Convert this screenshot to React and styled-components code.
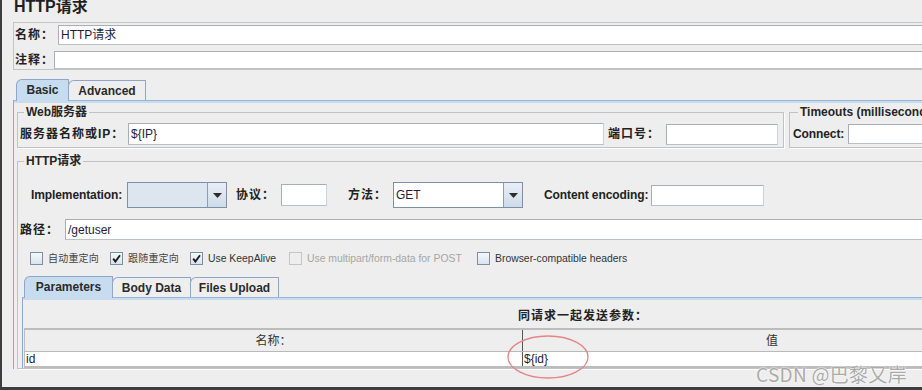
import React from "react";
import styled, { createGlobalStyle } from "styled-components";

const FONT = `"Liberation Sans", "Noto Sans CJK SC", sans-serif`;

const GlobalStyle = createGlobalStyle`
  html, body {
    margin: 0;
    padding: 0;
    background: #eeeeee;
    overflow: hidden;
  }
  body {
    font-family: ${FONT};
  }
`;

const Page = styled.div`
  position: relative;
  width: 922px;
  height: 390px;
  box-sizing: border-box;
  border-left: 2px solid #3d3d3d;
  border-bottom: 3px solid #3d3d3d;
  background: #eeeeee;
  overflow: hidden;
  color: #222;
`;

const Inner = styled.div`
  width: 1100px;
`;

const Title = styled.h1`
  margin: 0 0 0 12px;
  height: 22px;
  font: bold 16px/13px ${FONT};
  color: #1f1f1f;
`;

const NamePanel = styled.div`
  margin-left: 11px;
  height: 48px;
  box-sizing: border-box;
  border: 1px solid #c4c4c4;
  border-right: none;
  padding: 2px 0 0 1px;
  display: flex;
  flex-direction: column;
  gap: 6px;
`;

const Row = styled.div`
  display: flex;
  align-items: center;
  height: ${p => p.$h}px;
  margin-top: ${p => p.$mt || 0}px;
  padding-left: ${p => p.$pl || 0}px;
`;

const Label = styled.span`
  flex: none;
  box-sizing: border-box;
  width: ${p => (p.$w ? `${p.$w}px` : "auto")};
  margin-left: ${p => p.$ml || 0}px;
  font: bold 12px/14px ${FONT};
  letter-spacing: ${p => (p.$cn ? "1px" : "-0.1px")};
  color: #222;
  white-space: nowrap;
`;

const Field = styled.div`
  box-sizing: border-box;
  flex: ${p => (p.$w ? "none" : "1")};
  width: ${p => (p.$w ? `${p.$w}px` : "auto")};
  height: ${p => p.$h || 21}px;
  background: #ffffff;
  border: 1px solid #a7aeb8;
  border-right-color: #cdd3da;
  border-bottom-color: #b9c0c8;
  padding-left: 2px;
  display: flex;
  align-items: center;
  font: 12px/14px ${FONT};
  color: #1f1d38;
  white-space: nowrap;
`;

const TabBar = styled.div`
  display: flex;
  align-items: flex-end;
  height: 21px;
  margin-left: ${p => p.$ml}px;
  margin-top: ${p => p.$mt || 0}px;
  position: relative;
  z-index: 1;
`;

const Tab = styled.div`
  box-sizing: border-box;
  width: ${p => p.$w}px;
  height: ${p => (p.$active ? 22 : 20)}px;
  margin-bottom: ${p => (p.$active ? -1 : 0)}px;
  margin-left: -1px;
  border: 1px solid #8ea6c8;
  border-bottom: none;
  border-top-left-radius: 6px;
  background: ${p => (p.$active ? "#c8dcf0" : "#eeeeee")};
  font: bold 12px/20px ${FONT};
  text-align: center;
  color: #2a2a2a;
  &:first-child {
    margin-left: 0;
  }
`;

const TabPanel = styled.div`
  margin-left: ${p => p.$ml}px;
  border-top: 1px solid #9ab4da;
  border-left: 1px solid #8ea8d2;
  box-shadow: inset 0 2px 0 #c8dcf0;
  padding: ${p => p.$pad};
`;

const GroupRow = styled.div`
  display: flex;
  gap: 5px;
`;

const Group = styled.fieldset`
  margin: ${p => p.$mt || 0}px 0 0 0;
  min-width: 0;
  box-sizing: border-box;
  flex: ${p => (p.$w ? "none" : "1")};
  width: ${p => (p.$w ? `${p.$w}px` : "auto")};
  border: 1px solid #c2c2c2;
  box-shadow: 1px 1px 0 #ffffff;
  padding: ${p => p.$pad};
`;

const Legend = styled.legend`
  margin-left: ${p => p.$ml || 4}px;
  padding: 0 2px;
  font: bold 12px/13px ${FONT};
  color: #262626;
  white-space: nowrap;
`;

const Combo = styled.div`
  flex: none;
  box-sizing: border-box;
  display: flex;
  width: ${p => p.$w}px;
  height: 26px;
  border: 1px solid #7d90aa;
  background: ${p => (p.$empty ? "#dde5ee" : "#ffffff")};
`;

const ComboText = styled.div`
  flex: 1;
  padding-left: 2px;
  display: flex;
  align-items: center;
  font: 12px/14px ${FONT};
  color: #1f1d38;
`;

const ComboArrow = styled.div`
  width: 18px;
  border-left: 1px solid #8b9db5;
  background: linear-gradient(#e8eef6, #cfdbe8);
  display: flex;
  align-items: center;
  justify-content: center;
`;

const CheckRow = styled.div`
  display: flex;
  align-items: center;
  height: 14px;
  margin-top: 11px;
  padding-left: 10px;
`;

const CheckItem = styled.div`
  flex: none;
  width: ${p => (p.$w ? `${p.$w}px` : "auto")};
  display: flex;
  align-items: center;
  gap: 5px;
  font: 10.4px/13px ${FONT};
  color: ${p => (p.$disabled ? "#a6a6a6" : "#333333")};
  white-space: nowrap;
`;

const CnText = styled.span`
  font-size: 10px;
  letter-spacing: 0.2px;
  color: #444;
`;

const Box = styled.span`
  flex: none;
  box-sizing: border-box;
  width: 13px;
  height: 13px;
  border: 1px solid ${p => (p.$disabled ? "#c4c4c4" : "#7d8ea4")};
  background: ${p =>
    p.$disabled ? "#eeeeee" : "linear-gradient(#f5f8fc, #d9e3ef)"};
  display: flex;
  align-items: center;
  justify-content: center;
`;

const Caption = styled.div`
  height: 25px;
  padding: 4px 0 0 495px;
  display: flex;
  align-items: center;
  font: bold 12px/14px ${FONT};
  letter-spacing: 1px;
  color: #222;
`;

const Table = styled.div`
  width: 996px;
  margin-left: 1px;
  border-left: 1px solid #bdbdbd;
`;

const TableRow = styled.div`
  display: grid;
  grid-template-columns: 497px 1fr;
  height: ${p => p.$h}px;
  box-sizing: border-box;
  background: ${p => (p.$head ? "#eeeeee" : "#ffffff")};
  border-top: ${p => (p.$head ? "2px solid #bcbcbc" : "none")};
  border-bottom: ${p => (p.$head ? "1px solid #b9b9b9" : "2px solid #bcbcbc")};
`;

const Cell = styled.div`
  display: flex;
  align-items: center;
  justify-content: ${p => (p.$center ? "center" : "flex-start")};
  padding-left: ${p => (p.$center ? 0 : 1)}px;
  border-left: ${p => (p.$sep ? "1px solid #555555" : "none")};
  font: 12px/14px ${FONT};
  color: ${p => (p.$center ? "#333" : "#1f1d38")};
`;

const Mark = styled.svg`
  position: absolute;
  left: 503px;
  top: 334px;
  pointer-events: none;
`;

const Watermark = styled.div`
  position: absolute;
  left: 754px;
  top: 362px;
  font: 19px/23px "Noto Sans CJK SC", "Liberation Sans", sans-serif;
  letter-spacing: 0.3px;
  color: #aaaaaa;
  text-shadow: 0 0 2px #ffffff, 0 0 1px #ffffff;
  white-space: nowrap;
`;

const Arrow = () => (
  <svg width="9" height="5" viewBox="0 0 9 5">
    <path d="M0 0 H9 L4.5 5 Z" fill="#2c2c2c" />
  </svg>
);

const Check = () => (
  <svg width="9" height="9" viewBox="0 0 9 9">
    <path d="M1.2 4.6 L3.4 7.6 L8 1.2" fill="none" stroke="#1e1e1e" strokeWidth="1.9" />
  </svg>
);

const checks = [
  { label: "自动重定向", cn: true, w: 80 },
  { label: "跟随重定向", cn: true, w: 80, checked: true },
  { label: "Use KeepAlive", w: 99, checked: true },
  { label: "Use multipart/form-data for POST", w: 188, disabled: true },
  { label: "Browser-compatible headers" }
];

const App = () => (
  <Page>
    <GlobalStyle />
    <Inner>
      <Title>HTTP请求</Title>
      <NamePanel>
        <Row $h={20}>
          <Label $cn $w={43}>名称：</Label>
          <Field $h={20}>HTTP请求</Field>
        </Row>
        <Row $h={18}>
          <Label $cn $w={39}>注释：</Label>
          <Field $h={18} />
        </Row>
      </NamePanel>

      <TabBar $ml={14} $mt={9}>
        <Tab $w={53} $active>Basic</Tab>
        <Tab $w={78}>Advanced</Tab>
      </TabBar>
      <TabPanel $ml={11} $pad="5px 0 0 3px">
        <GroupRow>
          <Group $w={767} $pad="4px 4px 2px 2px">
            <Legend>Web服务器</Legend>
            <Row $h={22}>
              <Label $cn $w={108}>服务器名称或IP：</Label>
              <Field $w={476} $h={22}>{"${IP}"}</Field>
              <Label $cn $w={58} $ml={4}>端口号：</Label>
              <Field $w={112} $h={21} />
            </Row>
          </Group>
          <Group $pad="4px 0 2px 3px">
            <Legend $ml={5}>Timeouts (milliseconds)</Legend>
            <Row $h={22}>
              <Label $w={55}>Connect:</Label>
              <Field $w={150} $h={20} />
            </Row>
          </Group>
        </GroupRow>

        <Group $mt={7} $pad="14px 0 0 2px">
          <Legend>HTTP请求</Legend>
          <Row $h={26} $pl={11}>
            <Label $w={96}>Implementation:</Label>
            <Combo $w={100} $empty>
              <ComboText />
              <ComboArrow><Arrow /></ComboArrow>
            </Combo>
            <Label $cn $w={45} $ml={9}>协议：</Label>
            <Field $w={46} $h={22} />
            <Label $cn $w={45} $ml={21}>方法：</Label>
            <Combo $w={130}>
              <ComboText>GET</ComboText>
              <ComboArrow><Arrow /></ComboArrow>
            </Combo>
            <Label $w={107} $ml={21}>Content encoding:</Label>
            <Field $w={113} $h={21} />
          </Row>

          <Row $h={21} $mt={11}>
            <Label $cn $w={45}>路径：</Label>
            <Field $h={21}>/getuser</Field>
          </Row>

          <CheckRow>
            {checks.map(c => (
              <CheckItem key={c.label} $w={c.w} $disabled={c.disabled}>
                <Box $disabled={c.disabled}>{c.checked && <Check />}</Box>
                {c.cn ? <CnText>{c.label}</CnText> : c.label}
              </CheckItem>
            ))}
          </CheckRow>

          <TabBar $ml={4} $mt={11}>
            <Tab $w={89} $active>Parameters</Tab>
            <Tab $w={79}>Body Data</Tab>
            <Tab $w={89}>Files Upload</Tab>
          </TabBar>
          <TabPanel $ml={2} $pad="1px 0 0 0">
            <Caption>同请求一起发送参数：</Caption>
            <Table>
              <TableRow $head $h={24}>
                <Cell $center>名称：</Cell>
                <Cell $center $sep>值</Cell>
              </TableRow>
              <TableRow $h={16}>
                <Cell>id</Cell>
                <Cell $sep>{"${id}"}</Cell>
              </TableRow>
            </Table>
          </TabPanel>
        </Group>
      </TabPanel>
    </Inner>

    <Mark width="86" height="46" viewBox="0 0 86 46">
      <ellipse cx="43" cy="23" rx="40" ry="21" fill="none" stroke="#e58585" strokeWidth="1.3" />
    </Mark>
    <Watermark>CSDN @巴黎又岸</Watermark>
  </Page>
);

export default App;
